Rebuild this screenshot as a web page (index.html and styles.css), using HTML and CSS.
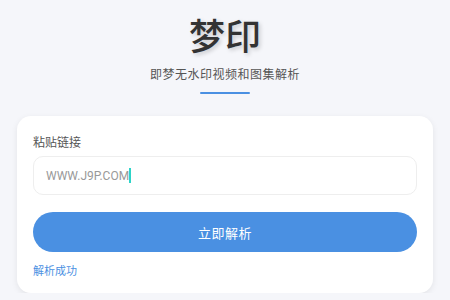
FILE: index.html
```html
<!DOCTYPE html>
<html lang="zh">
<head>
<meta charset="utf-8">
<title>梦印</title>
<link rel="stylesheet" href="styles.css">
</head>
<body>
<header class="header">
  <h1 class="title">梦印</h1>
  <p class="subtitle">即梦无水印视频和图集解析</p>
  <div class="underline"></div>
</header>
<main class="card">
  <label class="label">粘贴链接</label>
  <div class="input"><span class="placeholder">WWW.J9P.COM</span><span class="caret"></span></div>
  <button class="btn">立即解析</button>
  <p class="status">解析成功</p>
</main>
</body>
</html>
```

FILE: styles.css
```css
* { box-sizing: border-box; }
html, body { margin: 0; padding: 0; }
body {
  background: #f5f6fa;
  font-family: "Noto Sans CJK SC", "Noto Sans", sans-serif;
  color: #333;
  padding: 0 17px;
  overflow: hidden;
}
.header {
  display: flex;
  flex-direction: column;
  align-items: center;
  padding-top: 13px;
}
.title {
  margin: 0;
  font-size: 36px;
  line-height: 43px;
  font-weight: 500;
  color: #333;
  text-shadow: 2px 2px 4px rgba(0,0,0,0.18);
}
.subtitle {
  margin: 9px 0 0;
  font-size: 12px;
  line-height: 18px;
  letter-spacing: 0.5px;
  color: #555;
}
.underline {
  width: 50px;
  height: 2px;
  margin-top: 9px;
  background: #4a90e2;
  border-radius: 1px;
}
.card {
  margin-top: 22px;
  background: #fff;
  border-radius: 14px;
  box-shadow: 0 2px 6px rgba(0,0,0,0.08);
  padding: 17px 16px 15px;
  display: flex;
  flex-direction: column;
}
.label {
  font-size: 12px;
  line-height: 18px;
  color: #555;
}
.input {
  margin-top: 5px;
  height: 39px;
  border: 1px solid #eee;
  border-radius: 10px;
  display: flex;
  align-items: center;
  padding-left: 12px;
}
.placeholder {
  font-family: Roboto, "Noto Sans", sans-serif;
  font-size: 12px;
  color: #999;
}
.caret {
  width: 2px;
  height: 15px;
  background: #2dd4c8;
}
.btn {
  margin-top: 17px;
  height: 40px;
  border: none;
  border-radius: 20px;
  background: #4a90e2;
  color: #fff;
  font-family: "Noto Sans CJK SC", sans-serif;
  font-size: 13px;
  letter-spacing: 0.5px;
}
.status {
  margin: 10px 0 0;
  font-size: 11px;
  line-height: 16px;
  color: #4a90e2;
}
```
